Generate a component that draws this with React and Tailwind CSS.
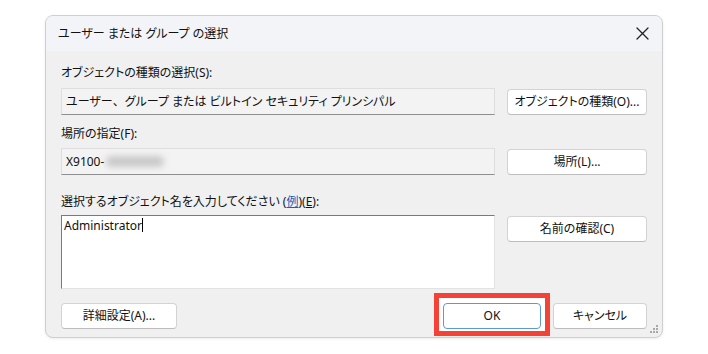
const font = "font-['Noto_Sans','Noto_Sans_CJK_JP',sans-serif] [font-feature-settings:'palt']";

const Btn = ({ children, className = "" }) => (
  <button
    className={`h-[26px] rounded-[4px] border border-[#d3d3d3] border-b-[#bdbdbd] bg-white text-[12px] text-[#111] ${className}`}
  >
    {children}
  </button>
);

const ReadBox = ({ children }) => (
  <div className="h-[27px] flex items-center px-[4px] bg-[#f3f3f3] border border-[#dedede] border-b-[#8f8f8f] text-[12px] text-[#111]">
    {children}
  </div>
);

const CloseIcon = () => (
  <svg width="13" height="13" viewBox="0 0 13 13" className="text-[#222]">
    <path d="M1 1L12 12M12 1L1 12" stroke="currentColor" strokeWidth="1.3" strokeLinecap="round" />
  </svg>
);

const Grip = () => (
  <svg width="10" height="10" viewBox="0 0 10 10" className="absolute right-[3px] bottom-[3px]">
    {[
      [8, 2],
      [5, 5],
      [8, 5],
      [2, 8],
      [5, 8],
      [8, 8],
    ].map(([x, y]) => (
      <rect key={`${x}-${y}`} x={x - 1} y={y - 1} width="2" height="2" fill="#a8a8a8" />
    ))}
  </svg>
);

export default function App() {
  return (
    <div className={`w-[708px] h-[354px] bg-white pt-[15px] pl-[45px] ${font}`}>
      <div className="relative w-[618px] h-[323px] rounded-[8px] border border-[#cfcfcf] bg-[#f0f0f0] overflow-hidden shadow-[0_1px_3px_rgba(0,0,0,0.08)]">
        {/* title bar */}
        <div className="h-[35px] flex items-center justify-between pl-[12px] pr-[13px] bg-[#f3f4f7]">
          <span className="text-[12px] text-[#111]">ユーザー または グループ の選択</span>
          <CloseIcon />
        </div>

        {/* body */}
        <div className="pt-[14px] px-[15px]">
          <div className="grid grid-cols-[434px_140px] gap-x-[12px]">
            <div className="text-[12px] leading-[16px] text-[#111]">オブジェクトの種類の選択(S):</div>
            <div />
            <div className="mt-[7px]">
              <ReadBox>
                ユーザー<span className="[font-feature-settings:normal]">、</span>グループ または ビルトイン セキュリティ プリンシパル
              </ReadBox>
            </div>
            <div className="mt-[7px]">
              <Btn className="w-full">オブジェクトの種類(O)...</Btn>
            </div>

            <div className="mt-[11px] text-[12px] leading-[16px] text-[#111]">場所の指定(F):</div>
            <div />
            <div className="mt-[6px]">
              <ReadBox>
                <span>X9100-</span>
                <span className="inline-block w-[58px] h-[11px] ml-[2px] rounded-full bg-[#c9c9c9] blur-[3px]" />
              </ReadBox>
            </div>
            <div className="mt-[6px]">
              <Btn className="w-full">場所(L)...</Btn>
            </div>

            <div className="mt-[19px] text-[12px] leading-[16px] text-[#111]">
              選択するオブジェクト名を入力してください (<span className="text-[#1a5fb4] underline">例</span>)(<span className="underline">E</span>):
            </div>
            <div />
            <div className="mt-[5px] h-[74px] bg-white border border-[#e2e2e2] border-t-[#7a7a7a] border-l-[#7a7a7a] px-[2px] pt-[2px] text-[12px] leading-[16px] text-[#111]">
              Administrator<span className="inline-block w-px h-[14px] align-[-2px] bg-black" />
            </div>
            <div className="mt-[5px]">
              <Btn className="w-full">名前の確認(C)</Btn>
            </div>
          </div>

          {/* bottom row */}
          <div className="mt-[13px] flex items-center">
            <Btn className="w-[116px]">詳細設定(A)...</Btn>
            <div className="ml-auto flex items-center gap-[12px]">
              <div className="relative">
                <span className="absolute -left-[9px] -right-[9px] -top-[9px] -bottom-[7px] border-[5px] border-[#f44336] bg-white" />
                <button className="relative h-[26px] w-[98px] rounded-[4px] border border-[#5b9bd5] bg-white text-[12px] text-[#111]">
                  OK
                </button>
              </div>
              <Btn className="w-[94px]">キャンセル</Btn>
            </div>
          </div>
        </div>
        <Grip />
      </div>
    </div>
  );
}
